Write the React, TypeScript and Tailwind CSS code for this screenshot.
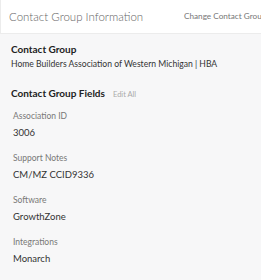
const fields = [
  { label: 'Association ID', value: '3006' },
  { label: 'Support Notes', value: 'CM/MZ CCID9336' },
  { label: 'Software', value: 'GrowthZone' },
  { label: 'Integrations', value: 'Monarch' },
  { label: 'Strategic Account', value: '' },
];

export default function App() {
  return (
    <main className="h-[280px] w-[261px] overflow-hidden bg-[#f7f7f8] font-['Lato',sans-serif]">
      {/* Header */}
      <div className="flex h-[34px] items-center overflow-hidden border-b border-l border-[#ececec] bg-white pl-2">
        <h1 className="w-[175px] shrink-0 whitespace-nowrap text-[11.5px] font-light text-[#666]">Contact Group Information</h1>
        <a className="shrink-0 whitespace-nowrap text-[8.2px] text-[#777]">Change Contact Group</a>
      </div>

      <div className="px-[11px] pt-[7px]">
        <section>
          <h2 className="text-[10px] font-bold leading-[16px] text-[#222]">Contact Group</h2>
          <p className="whitespace-nowrap text-[8.6px] leading-[15px] text-[#333]">Home Builders Association of Western Michigan | HBA</p>
        </section>

        <section className="mt-[13px]">
          <div className="flex items-baseline gap-[8px]">
            <h2 className="text-[10px] font-bold leading-[16px] text-[#222]">Contact Group Fields</h2>
            <span className="text-[7.5px] text-[#aaa]">Edit All</span>
          </div>

          <div className="mt-[8px] pl-[2px]">
            {fields.map((f) => (
              <div key={f.label} className="h-[42px]">
                <p className="text-[8.5px] leading-[14px] text-[#777]">{f.label}</p>
                <p className="mt-[3px] text-[9.5px] leading-[14px] text-[#333]">{f.value}</p>
              </div>
            ))}
          </div>
        </section>
      </div>
    </main>
  );
}
